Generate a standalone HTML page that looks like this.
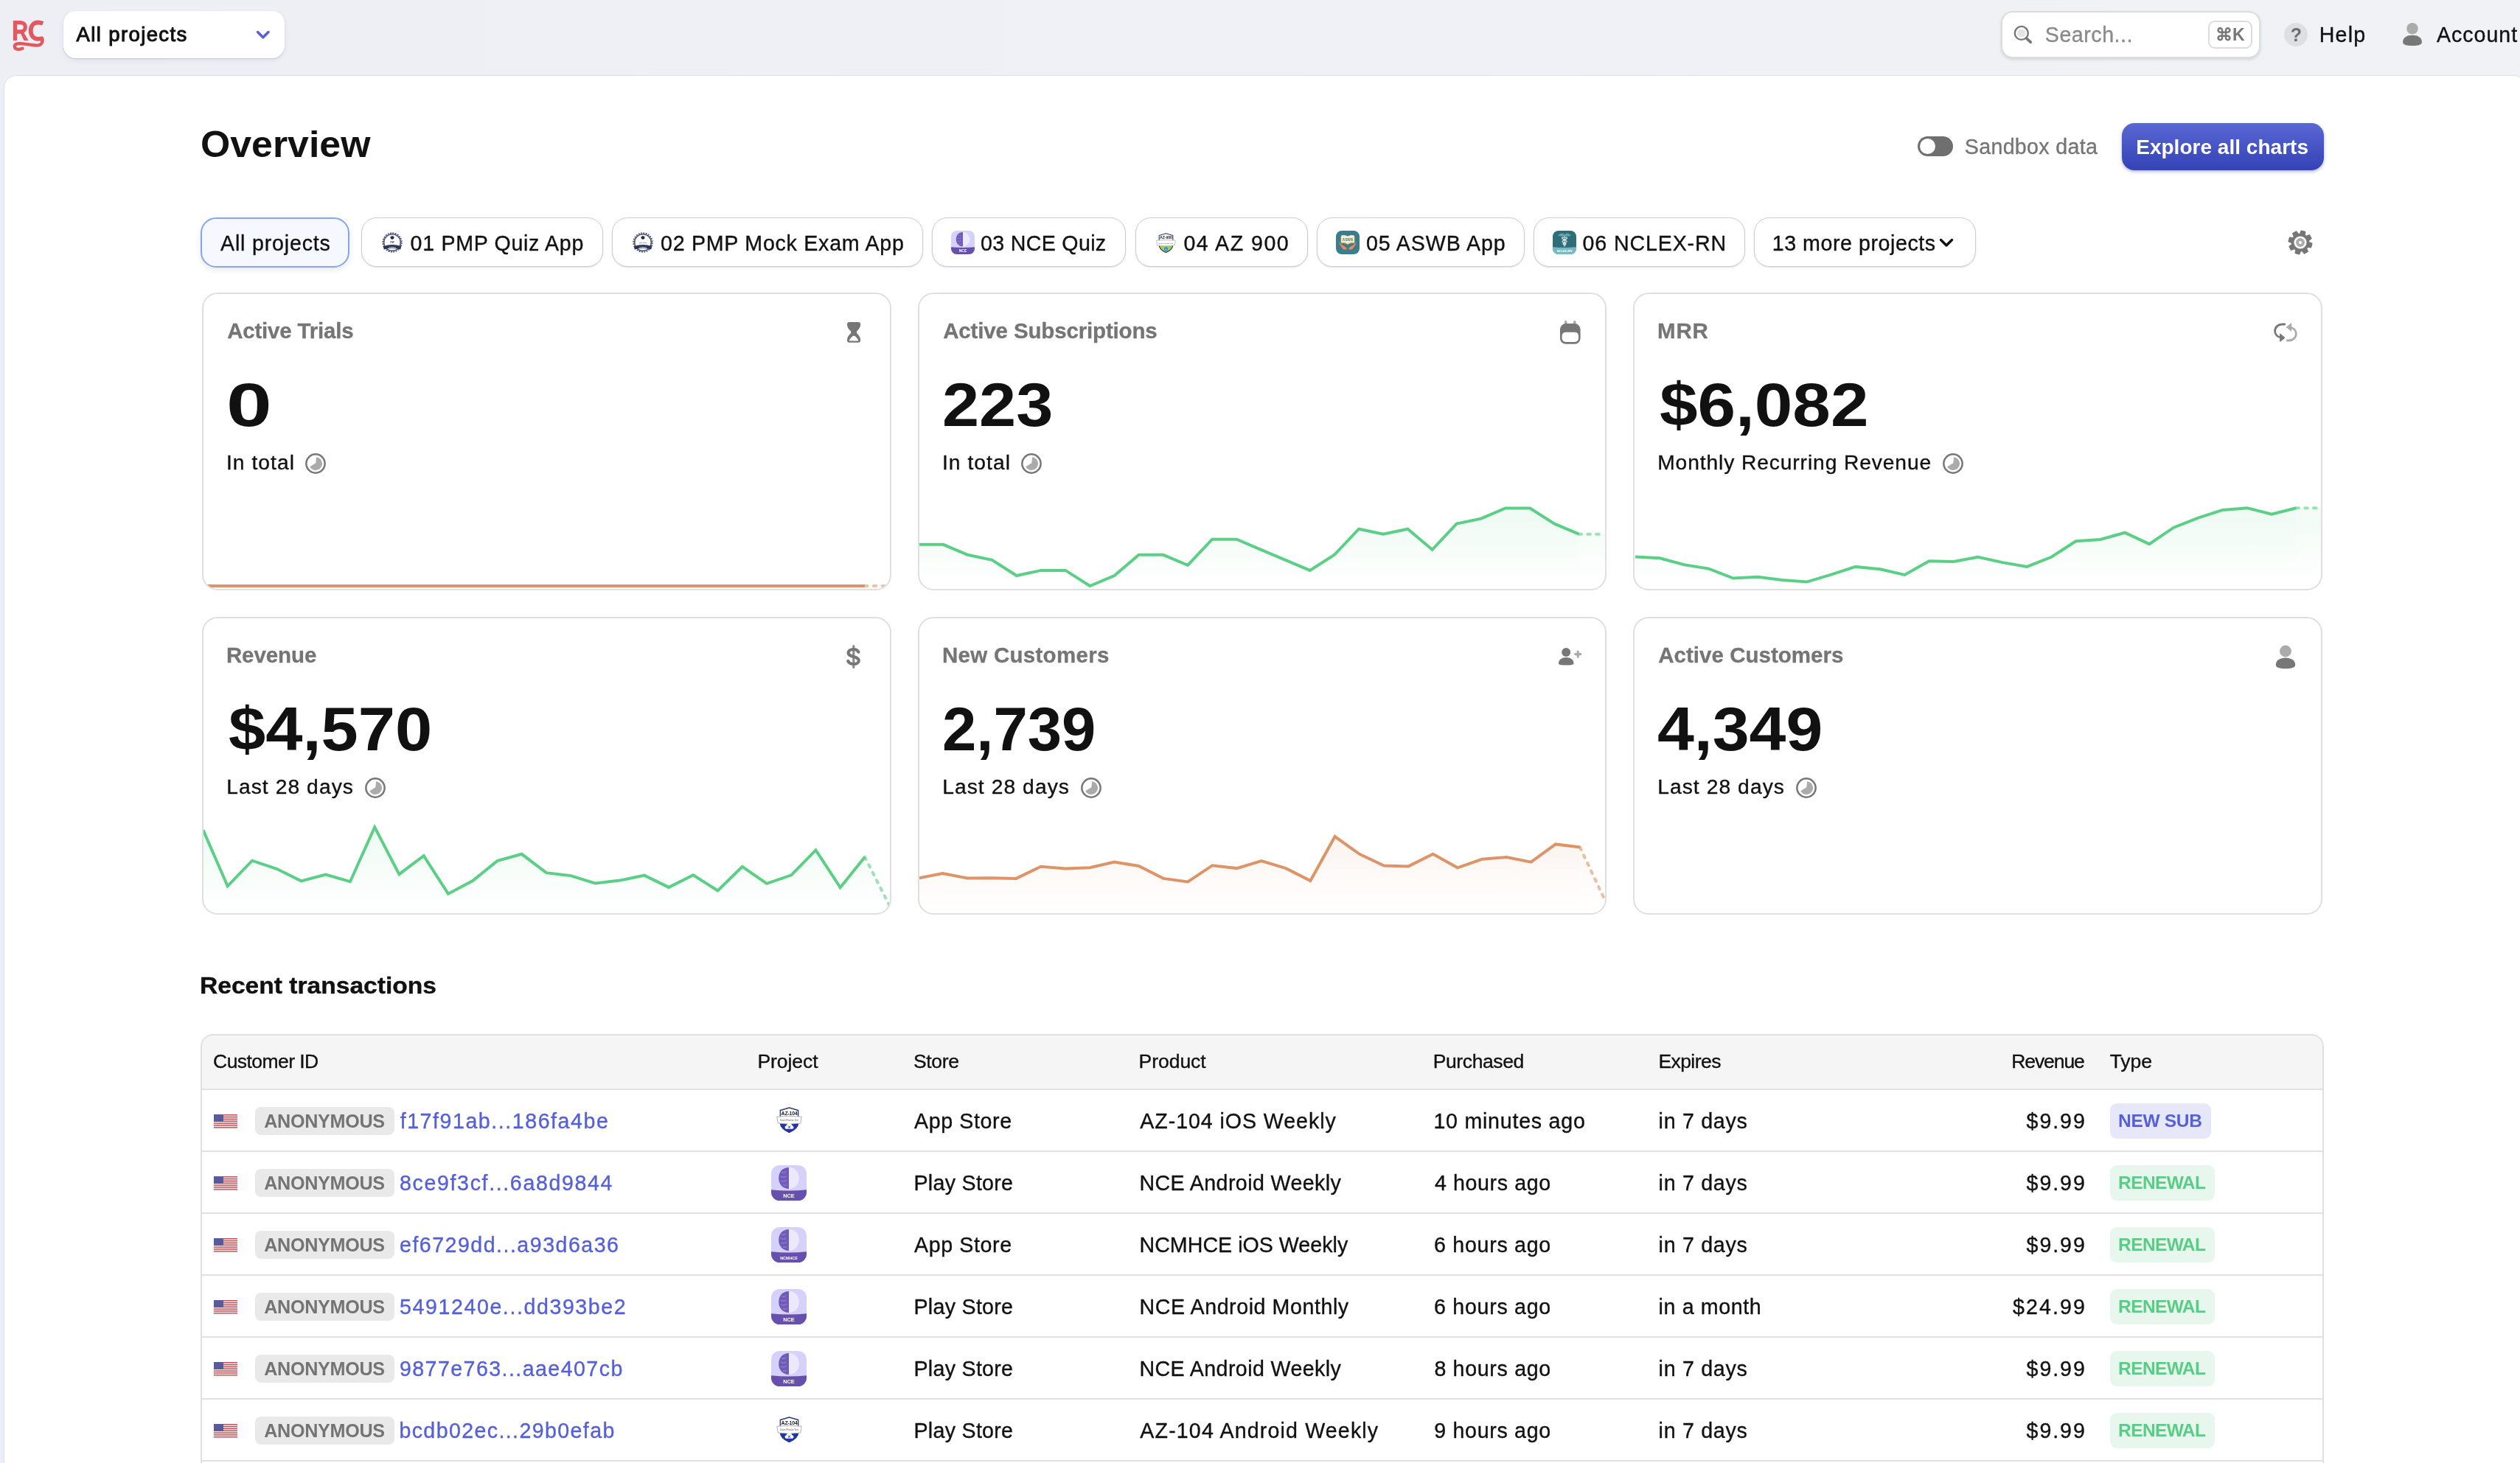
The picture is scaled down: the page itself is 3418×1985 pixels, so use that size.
<!DOCTYPE html><html lang="en"><head><meta charset="utf-8"><title>Overview</title><style>
*{box-sizing:border-box;margin:0;padding:0}
html,body{width:3418px;height:1985px;overflow:hidden}
body{background:linear-gradient(90deg,#edeff5 0%,#f1f2f6 100%);font-family:"Liberation Sans",sans-serif;color:#111;position:relative}
#root{position:absolute;left:0;top:0;width:3418px;height:1985px;overflow:hidden;will-change:transform}
.t{position:absolute;white-space:nowrap;line-height:1}
.abs{position:absolute}
.panel{position:absolute;left:5px;top:102px;width:3421px;height:1920px;background:#fff;border:1px solid #dcdfe6;border-radius:17px}
.dd{position:absolute;left:86px;top:15px;width:300px;height:64px;background:#fff;border-radius:17px;box-shadow:0 1px 2px rgba(20,30,60,.17),0 3px 8px rgba(20,30,60,.06)}
.search{position:absolute;left:2714px;top:15px;width:352px;height:64px;background:#fff;border-radius:16px;border:2px solid #dcdcdc;box-shadow:0 2px 4px rgba(0,0,0,.12)}
.kbd{position:absolute;left:2995px;top:28px;width:60px;height:38px;border:2px solid #dcdcdc;border-radius:9px;background:#fff}
.chip{position:absolute;top:295px;height:67px;background:#fff;border:1.7px solid #cdcdcd;border-radius:21px;box-shadow:0 1px 2px rgba(0,0,0,.13)}
.chip.sel{background:#f5f8fe;border:2px solid #85a6ec;box-shadow:0 3px 8px rgba(0,0,0,.09);height:68px;border-radius:21px}
.card{position:absolute;width:935px;height:404px;background:#fff;border:2px solid #dfdfdf;border-radius:21px;overflow:hidden}
.card svg{position:absolute;left:-2px;top:-2px}
.btn{position:absolute;left:2878px;top:167px;width:274px;height:64px;border-radius:17px;background:linear-gradient(#5a68d4,#3342b6);box-shadow:0 2px 4px rgba(40,50,140,.35)}
.toggle{position:absolute;left:2601px;top:185px;width:48px;height:27px;border-radius:14px;background:#6f6f6f}
.toggle i{position:absolute;left:3px;top:3px;width:21px;height:21px;border-radius:50%;background:#fff}
.table{position:absolute;left:272px;top:1403px;width:2880px;height:700px;border:2px solid #e0e0e0;border-radius:17px;background:#fff;overflow:hidden}
.th{position:absolute;left:0;top:0;width:100%;height:74px;background:#f5f5f5}
.hl{position:absolute;left:274px;width:2876px;height:2px;background:#e2e2e2}
.anon{position:absolute;left:346px;width:189px;height:38px;border-radius:8px;background:#e9e9e9}
.badge{position:absolute;left:2862px;height:48px;border-radius:9px}
</style></head><body><div id="root">
<!--TOPBAR-->
<svg class="abs" style="left:10px;top:20px" width="60" height="56" viewBox="10 20 60 56"><g fill="none" stroke="#e1595e" stroke-width="5.3"><path d="M20.5 55V28M20.5 30.6H28.2a6.200 6.200 0 0 1 0 12.400H20.500"/><path d="M58.2 31.9C56.200 31 54 30.500 51.600 30.500C45.400 30.500 41.700 35 41.700 41.600C41.700 48.300 45.600 52.900 52 52.900C54.800 52.900 56.800 52.500 58.600 51.700" stroke-width="5.8"/><path d="M57.300 52.200C58.300 57.500 56.500 61.600 50 61.600C44 61.600 37 59.700 29 59.100C24 58.700 19.800 59.600 19.800 63C19.800 66.200 23 67.100 25.600 66.900C27.600 66.700 29 66.100 30.600 65.600" stroke-width="4.3" stroke-linecap="round"/></g><path d="M27 43.2L31.8 43.200L38.600 55L32.600 55Z" fill="#e1595e"/></svg>
<div class="dd"></div>
<div class="t" style="top:33.4px;font-size:27.6px;left:103.5px;-webkit-text-stroke:.35px;letter-spacing:1.35px;-webkit-text-stroke:1px;">All projects</div>
<svg class="abs" style="left:346px;top:40px" width="22" height="15" viewBox="0 0 22 15"><path d="M3.600 3.600l7.200 7.200 7.200-7.200" fill="none" stroke="#5560d8" stroke-width="3.500" stroke-linecap="round" stroke-linejoin="round"/></svg>
<div class="search"></div>
<svg class="abs" style="left:2728px;top:31px" width="30" height="30" viewBox="2728 31 30 30"><circle cx="2741.8" cy="44.900" r="9" fill="#fff" stroke="#777" stroke-width="2.400"/><circle cx="2741.8" cy="44.900" r="5.700" fill="#e4e4e4"/><path d="M2748.5 51.900L2754.200 57.200" stroke="#777" stroke-width="3.700" stroke-linecap="round"/></svg>
<div class="t" style="top:33.3px;font-size:28.6px;left:2773.8px;-webkit-text-stroke:.35px;color:#8a8a8a;letter-spacing:0.53px;">Search...</div>
<div class="kbd"></div>
<div class="t" style="top:36.0px;font-size:23px;left:3005.0px;font-weight:700;color:#777;font-family:"DejaVu Sans","Liberation Sans",sans-serif;">⌘K</div>
<div class="abs" style="left:3098px;top:31px;width:32px;height:32px;border-radius:50%;background:#dedfe3"></div>
<div class="t" style="top:34.8px;font-size:25px;left:3106.8px;font-weight:700;color:#6e6e6e;">?</div>
<div class="t" style="top:33.3px;font-size:28.6px;left:3145.8px;-webkit-text-stroke:.35px;letter-spacing:1.17px;">Help</div>
<svg class="abs" style="left:3258px;top:30px" width="28" height="32.4" viewBox="0 0 28 33"><circle cx="14" cy="9" r="7.900" fill="#ababab"/><path d="M0.800 27.500C0.800 21.500 6.500 18.100 14 18.100S27.200 21.500 27.200 27.500C27.200 31.500 21.500 32.700 14 32.700S0.800 31.500 0.800 27.500Z" fill="#777"/></svg>
<div class="t" style="top:33.3px;font-size:28.6px;left:3305.0px;-webkit-text-stroke:.35px;letter-spacing:0.96px;">Account</div>
<!--PANEL-->
<div class="panel"></div>
<div class="t" style="top:170.9px;font-size:50px;left:271.7px;font-weight:700;transform:scaleX(1.0363);transform-origin:left center;">Overview</div>
<div class="toggle"><i></i></div>
<div class="t" style="top:185.3px;font-size:28.6px;left:2664.8px;-webkit-text-stroke:.35px;color:#757575;letter-spacing:0.32px;">Sandbox data</div>
<div class="btn"></div>
<div class="t" style="top:185.8px;font-size:28px;left:2897.2px;font-weight:700;color:#fff;letter-spacing:0.02px;">Explore all charts</div>
<!--CHIPS-->
<div class="chip sel" style="left:272px;width:202px"></div>
<div class="t" style="top:315.8px;font-size:28.6px;left:299.0px;-webkit-text-stroke:.35px;letter-spacing:0.82px;">All projects</div>
<div class="chip" style="left:490px;width:328px"></div>
<svg class="abs" style="left:517.9px;top:315.0px" width="28" height="28" viewBox="0 0 28 28"><circle cx="14" cy="14" r="12.800" fill="none" stroke="#4c5678" stroke-width="1.800" stroke-dasharray="1.900 1.450"/><circle cx="14" cy="14" r="11.300" fill="#fff" stroke="#4c5678" stroke-width="1.500"/><path d="M11.400 6.300l2.600-1.300 2.600 1.300-.4 2.500-2.200 1.100-2.200-1.100z" fill="#262c3e"/><path d="M1.800 19.200Q14 14.600 26.200 19.200L25.200 23.400Q14 19.600 2.800 23.400Z" fill="#2b3656"/><text x="14" y="15" font-family="Liberation Sans,sans-serif" font-weight="700" font-size="2.600" fill="#444c66" text-anchor="middle">PMP</text><text x="14" y="20.800" font-family="Liberation Sans,sans-serif" font-weight="700" font-size="2.500" fill="#fff" text-anchor="middle">certified</text></svg>
<div class="t" style="top:315.8px;font-size:28.6px;left:556.6px;-webkit-text-stroke:.35px;letter-spacing:0.68px;">01 PMP Quiz App</div>
<div class="chip" style="left:830px;width:422px"></div>
<svg class="abs" style="left:858px;top:315.0px" width="28" height="28" viewBox="0 0 28 28"><circle cx="14" cy="14" r="12.800" fill="none" stroke="#4c5678" stroke-width="1.800" stroke-dasharray="1.900 1.450"/><circle cx="14" cy="14" r="11.300" fill="#fff" stroke="#4c5678" stroke-width="1.500"/><path d="M11.400 6.300l2.600-1.300 2.600 1.300-.4 2.500-2.200 1.100-2.200-1.100z" fill="#262c3e"/><path d="M1.800 19.200Q14 14.600 26.200 19.200L25.200 23.400Q14 19.600 2.800 23.400Z" fill="#2b3656"/><text x="14" y="15" font-family="Liberation Sans,sans-serif" font-weight="700" font-size="2" fill="#444c66" text-anchor="middle">PMP Mock</text><text x="14" y="20.800" font-family="Liberation Sans,sans-serif" font-weight="700" font-size="2.500" fill="#fff" text-anchor="middle">certified</text></svg>
<div class="t" style="top:315.8px;font-size:28.6px;left:896.0px;-webkit-text-stroke:.35px;letter-spacing:0.74px;">02 PMP Mock Exam App</div>
<div class="chip" style="left:1264px;width:263px"></div>
<svg class="abs" style="left:1290px;top:313.0px" width="32" height="32" viewBox="0 0 48 48"><defs><clipPath id="u1"><rect width="48" height="48" rx="11.5"/></clipPath></defs><g clip-path="url(#u1)"><rect width="48" height="48" fill="#d5d1fb"/><path d="M0 33.2Q24 35.600 48 33.200V48H0z" fill="#674fae"/><path d="M24 3C15 3 10.200 9.500 10.200 17.500S15.500 32 24 32z" fill="#705cb8"/><path d="M24 3C33 3 37.800 9.500 37.800 17.500S32.500 32 24 32z" fill="#ece9fd"/><path d="M14 9.500q3 2 6-.5M12.500 15q4 2.500 8 0M13 21q4 2 8-.500M16 26.500q2.500 1.500 5.500 0" stroke="#8f7fd0" stroke-width="1.300" fill="none"/><text x="24" y="44" font-family="Liberation Sans,sans-serif" font-weight="700" font-size="7.4" fill="#fff" text-anchor="middle">NCE</text></g></svg>
<div class="t" style="top:315.8px;font-size:28.6px;left:1330.0px;-webkit-text-stroke:.35px;letter-spacing:0.33px;">03 NCE Quiz</div>
<div class="chip" style="left:1539.5px;width:234.5px"></div>
<svg class="abs" style="left:1567.8px;top:315.5px" width="27" height="27" viewBox="0 0 28 28"><defs><clipPath id="u2"><rect x="0" y="17.200" width="28" height="12"/></clipPath></defs><path d="M4.3 3.600L14 0.800L23.700 3.600V16.500C23.700 21.800 18.800 25.400 14 27.400C9.200 25.400 4.300 21.800 4.300 16.500Z" fill="#fff" stroke="#2a3d78" stroke-width="1.100" stroke-linejoin="round"/><path clip-path="url(#u2)" d="M4.3 3.600L14 0.800L23.700 3.600V16.500C23.700 21.800 18.800 25.400 14 27.400C9.200 25.400 4.300 21.800 4.300 16.500Z" fill="#9ccf5c" stroke="#2a3d78" stroke-width="1.100" stroke-linejoin="round"/><path d="M0.600 10.600Q14 9 27.400 10.600L26.200 17.600Q14 19.400 1.800 17.600Z" fill="#fff" stroke="#a4a4a8" stroke-width=".7" stroke-linejoin="round"/><text x="14" y="8.600" font-family="Liberation Sans,sans-serif" font-weight="700" font-size="5.600" fill="#1b1b22" text-anchor="middle" letter-spacing="-.2">AZ-900</text><text x="14" y="15.300" font-family="Liberation Sans,sans-serif" font-size="2.300" fill="#555" text-anchor="middle">Exam Practice Test</text><path d="M14 19.600l2.600 1.500v3l-2.600 1.500-2.600-1.500v-3z" fill="#3a86d6"/><path d="M12.900 23.600q1.100-2.400 2.200 0" stroke="#fff" stroke-width=".7" fill="none"/></svg>
<div class="t" style="top:315.8px;font-size:28.6px;left:1605.4px;-webkit-text-stroke:.35px;letter-spacing:1.5px;">04 AZ 900</div>
<div class="chip" style="left:1786px;width:282px"></div>
<svg class="abs" style="left:1812px;top:313.0px" width="32" height="32" viewBox="0 0 32 32"><rect width="32" height="32" rx="8" fill="#3a7d8c"/><path d="M3.700 12.400C4.200 16 5.700 18 8.700 19.500L13.200 22.300C14.400 23.100 14.700 24.400 14.700 25.600H10.200C8.200 22.600 4.400 20 3.700 12.400Z" fill="#ee8657"/><path d="M28.300 12.400C27.800 16 26.300 18 23.300 19.500L18.800 22.300C17.600 23.100 17.300 24.400 17.300 25.600H21.800C23.800 22.600 27.600 20 28.300 12.400Z" fill="#ee8657"/><path d="M6.500 7.800Q11.500 5.800 16 8.600Q20.500 5.800 25.500 7.800V17.400Q20.500 16 16 19.300Q11.500 16 6.500 17.400Z" fill="#e9945f"/><path d="M7.200 6.600Q11.800 5 16 7.600Q20.200 5 24.800 6.600V16.200Q20.200 15 16 18Q11.800 15 7.200 16.200Z" fill="#fbf0c9"/><text x="16" y="13.500" font-family="Liberation Sans,sans-serif" font-weight="700" font-size="4.700" fill="#3a7d8c" text-anchor="middle">ASWB</text></svg>
<div class="t" style="top:315.8px;font-size:28.6px;left:1853.0px;-webkit-text-stroke:.35px;letter-spacing:0.9px;">05 ASWB App</div>
<div class="chip" style="left:2080px;width:287px"></div>
<svg class="abs" style="left:2106px;top:313.0px" width="32" height="32" viewBox="0 0 32 32"><defs><clipPath id="u3"><rect width="32" height="32" rx="8"/></clipPath></defs><g clip-path="url(#u3)"><rect width="32" height="32" fill="#2f6e79"/><path d="M0 22.200Q16 23.800 32 22.200V32H0z" fill="#7ab9c4"/><path d="M16 5.400C14 3.200 11.500 3.400 10 4.300 9 5 7.800 6 6.800 6.600 9 7.600 12.500 7.800 16 7.600 19.500 7.800 23 7.600 25.200 6.600 24.200 6 23 5 22 4.300 20.500 3.400 18 3.200 16 5.400Z" fill="#62a6b0"/><path d="M16 7.500V21.500" stroke="#eef8f9" stroke-width="1" stroke-linecap="round"/><path d="M14.800 9.400C12.800 8.200 11.800 10.400 13.400 11.200L18 13.400C19.600 14.200 18.800 15.600 17.600 16L14.800 17C13.800 17.400 14 18.600 15 18.900L16.800 19.600" stroke="#eef8f9" stroke-width="1.100" fill="none" stroke-linecap="round"/><path d="M17.200 9.400C19.200 8.200 20.200 10.400 18.600 11.200L14 13.400C12.400 14.200 13.200 15.600 14.400 16L17.200 17C18.200 17.400 18 18.600 17 18.900" stroke="#eef8f9" stroke-width="1.100" fill="none" stroke-linecap="round"/><text x="16" y="29" font-family="Liberation Sans,sans-serif" font-weight="700" font-size="4" fill="#fff" text-anchor="middle">NCLEX-RN</text></g></svg>
<div class="t" style="top:315.8px;font-size:28.6px;left:2146.6px;-webkit-text-stroke:.35px;letter-spacing:0.86px;">06 NCLEX-RN</div>
<div class="chip" style="left:2379px;width:301px"></div>
<div class="t" style="top:315.8px;font-size:28.6px;left:2403.7px;-webkit-text-stroke:.35px;letter-spacing:0.56px;">13 more projects</div>
<svg class="abs" style="left:2628.7px;top:322px" width="22" height="16" viewBox="0 0 22 16"><path d="M3.500 3.500l7.500 7.500 7.500-7.500" fill="none" stroke="#111" stroke-width="3.400" stroke-linecap="round" stroke-linejoin="round"/></svg>
<svg class="abs" style="left:3100px;top:309px" width="40" height="40" viewBox="0 0 40 40"><path d="M19.90 8.60 L21.50 4.47 L26.47 5.80 L25.79 10.18 L27.99 11.87 L32.04 10.08 L34.61 14.54 L31.04 17.15 L31.40 19.90 L35.53 21.50 L34.20 26.47 L29.82 25.79 L28.13 27.99 L29.92 32.04 L25.46 34.61 L22.85 31.04 L20.10 31.40 L18.50 35.53 L13.53 34.20 L14.21 29.82 L12.01 28.13 L7.96 29.92 L5.39 25.46 L8.96 22.85 L8.60 20.10 L4.47 18.50 L5.80 13.53 L10.18 14.21 L11.87 12.01 L10.08 7.96 L14.54 5.39 L17.15 8.96Z" fill="#767676" stroke="#767676" stroke-width="2" stroke-linejoin="round"/><circle cx="20" cy="20" r="8.600" fill="#fff"/><circle cx="20" cy="20" r="4" fill="none" stroke="#ababab" stroke-width="3.800"/></svg>
<!--CARDS-->
<div class="card" style="left:274px;top:397px;width:935px"><svg width="935" height="404" viewBox="0 0 935 404"><path d="M1 397.9H899" stroke="#dc9468" stroke-width="4"/><path d="M899 397.9H933" stroke="#dc9468" stroke-opacity=".55" stroke-width="4" stroke-dasharray="3.6 8.2" stroke-linecap="round"/></svg></div>
<div class="t" style="top:433.9px;font-size:29.5px;left:308.2px;font-weight:700;color:#757575;letter-spacing:-0.2px;-webkit-text-stroke:.3px;">Active Trials</div>
<div class="t" style="top:506.7px;font-size:84px;left:306.6px;font-weight:700;transform:scaleX(1.3209);transform-origin:left center;">0</div>
<div class="t" style="top:613.1px;font-size:28.2px;left:307.0px;-webkit-text-stroke:.35px;letter-spacing:1.04px;">In total</div>
<svg class="abs" style="left:412.9px;top:613.9px" width="30" height="30" viewBox="-15 -15 30 30"><circle cx="0" cy="0" r="12.650" fill="#fff" stroke="#777" stroke-width="2.500"/><path d="M0.900 -0.400L1.600 -8.100A8.300 8.300 0 1 1 -7 4.400Z" fill="#ababab" stroke="#ababab" stroke-width="1.200" stroke-linejoin="round"/></svg>
<svg class="abs" style="left:1149px;top:437px" width="18.200" height="27.800" viewBox="0 0 18.200 27.800"><path d="M3 0H15.200Q18.200 0 18.200 3C18 8 15.300 10.300 13 12.700V15.100C15.300 17.500 18 19.800 18.200 24.800Q18.200 27.800 15.200 27.800H3Q0 27.800 0 24.800C0.200 19.800 2.900 17.500 5.200 15.100V12.700C2.900 10.300 0.200 8 0 3Q0 0 3 0Z" fill="#767676"/><path d="M9.100 18.600C10.700 18.600 14 22.300 15.100 24.300Q15.600 25.600 14.200 25.600H4Q2.600 25.600 3.100 24.300C4.200 22.300 7.500 18.600 9.100 18.600Z" fill="#fff"/></svg>
<div class="card" style="left:1245px;top:397px;width:934px"><svg width="934" height="404" viewBox="0 0 934 404"><defs><linearGradient id="g5bcf86931" x1="0" y1="293" x2="0" y2="396" gradientUnits="userSpaceOnUse"><stop offset="0" stop-color="#5bcf86" stop-opacity=".105"/><stop offset="1" stop-color="#5bcf86" stop-opacity="0"/></linearGradient></defs><path d="M1.2 341.8 L34.4 341.8 L67.5 355.8 L100.7 362.9 L133.8 384.0 L167.0 376.9 L200.2 376.9 L233.3 398.0 L266.5 384.0 L299.6 355.8 L332.8 355.8 L366.0 369.9 L399.1 334.7 L432.3 334.7 L465.4 348.8 L498.6 362.9 L531.8 376.9 L564.9 355.8 L598.1 320.7 L631.2 327.7 L664.4 320.7 L697.6 348.8 L730.7 313.6 L763.9 306.6 L797.0 292.5 L830.2 292.5 L863.4 313.6 L896.5 327.7 L896.5 404 L1.2 404Z" fill="url(#g5bcf86931)"/><path d="M896.5 327.7 L929.7 327.7 L932.7 327.7 L932.7 404 L896.5 404Z" fill="url(#g5bcf86931)" opacity=".8"/><path d="M1.2 341.8 L34.4 341.8 L67.5 355.8 L100.7 362.9 L133.8 384.0 L167.0 376.9 L200.2 376.9 L233.3 398.0 L266.5 384.0 L299.6 355.8 L332.8 355.8 L366.0 369.9 L399.1 334.7 L432.3 334.7 L465.4 348.8 L498.6 362.9 L531.8 376.9 L564.9 355.8 L598.1 320.7 L631.2 327.7 L664.4 320.7 L697.6 348.8 L730.7 313.6 L763.9 306.6 L797.0 292.5 L830.2 292.5 L863.4 313.6 L896.5 327.7" fill="none" stroke="#5bcf86" stroke-width="4" stroke-linejoin="miter" stroke-linecap="butt"/><path d="M896.5 327.7 L929.7 327.7" fill="none" stroke="#5bcf86" stroke-opacity=".6" stroke-width="4" stroke-dasharray="3.6 8.2" stroke-linecap="round"/></svg></div>
<div class="t" style="top:433.9px;font-size:29.5px;left:1279.2px;font-weight:700;color:#757575;letter-spacing:-0.15px;-webkit-text-stroke:.3px;">Active Subscriptions</div>
<div class="t" style="top:506.7px;font-size:84px;left:1277.7px;font-weight:700;transform:scaleX(1.0719);transform-origin:left center;">223</div>
<div class="t" style="top:613.1px;font-size:28.2px;left:1278.0px;-webkit-text-stroke:.35px;letter-spacing:1.04px;">In total</div>
<svg class="abs" style="left:1383.9px;top:613.9px" width="30" height="30" viewBox="-15 -15 30 30"><circle cx="0" cy="0" r="12.650" fill="#fff" stroke="#777" stroke-width="2.500"/><path d="M0.900 -0.400L1.600 -8.100A8.300 8.300 0 1 1 -7 4.400Z" fill="#ababab" stroke="#ababab" stroke-width="1.200" stroke-linejoin="round"/></svg>
<svg class="abs" style="left:2116.2px;top:435px" width="27.600" height="32" viewBox="0 0 27.600 32"><rect x="6" y="0" width="3.600" height="7" rx="1.800" fill="#ababab"/><rect x="18" y="0" width="3.600" height="7" rx="1.800" fill="#ababab"/><rect x="0" y="4.100" width="27.600" height="27.600" rx="7.800" fill="#767676"/><rect x="2.600" y="15.800" width="22.400" height="13.100" rx="4.800" fill="#fff"/></svg>
<div class="card" style="left:2215px;top:397px;width:935px"><svg width="935" height="404" viewBox="0 0 935 404"><defs><linearGradient id="g5bcf86975" x1="0" y1="292" x2="0" y2="396" gradientUnits="userSpaceOnUse"><stop offset="0" stop-color="#5bcf86" stop-opacity=".105"/><stop offset="1" stop-color="#5bcf86" stop-opacity="0"/></linearGradient></defs><path d="M3.1 358.4 L36.3 360.3 L69.5 369.2 L102.7 374.6 L135.9 387.6 L169.1 385.7 L202.3 390.0 L235.5 392.6 L268.7 382.6 L301.9 371.9 L335.1 375.3 L368.3 383.0 L401.5 364.2 L434.6 364.9 L467.8 358.8 L501.0 366.1 L534.2 371.9 L567.4 358.8 L600.6 337.2 L633.8 334.9 L667.0 325.7 L700.2 341.1 L733.4 318.7 L766.6 305.7 L799.8 294.9 L833.0 292.2 L866.2 300.7 L899.4 292.2 L899.4 404 L3.1 404Z" fill="url(#g5bcf86975)"/><path d="M899.4 292.2 L932.6 292.2 L935.6 292.2 L935.6 404 L899.4 404Z" fill="url(#g5bcf86975)" opacity=".8"/><path d="M3.1 358.4 L36.3 360.3 L69.5 369.2 L102.7 374.6 L135.9 387.6 L169.1 385.7 L202.3 390.0 L235.5 392.6 L268.7 382.6 L301.9 371.9 L335.1 375.3 L368.3 383.0 L401.5 364.2 L434.6 364.9 L467.8 358.8 L501.0 366.1 L534.2 371.9 L567.4 358.8 L600.6 337.2 L633.8 334.9 L667.0 325.7 L700.2 341.1 L733.4 318.7 L766.6 305.7 L799.8 294.9 L833.0 292.2 L866.2 300.7 L899.4 292.2" fill="none" stroke="#5bcf86" stroke-width="4" stroke-linejoin="miter" stroke-linecap="butt"/><path d="M899.4 292.2 L932.6 292.2" fill="none" stroke="#5bcf86" stroke-opacity=".6" stroke-width="4" stroke-dasharray="3.6 8.2" stroke-linecap="round"/></svg></div>
<div class="t" style="top:433.9px;font-size:29.5px;left:2247.9px;font-weight:700;color:#757575;letter-spacing:0.92px;-webkit-text-stroke:.3px;">MRR</div>
<div class="t" style="top:506.7px;font-size:84px;left:2251.0px;font-weight:700;transform:scaleX(1.1032);transform-origin:left center;">$6,082</div>
<div class="t" style="top:613.1px;font-size:28.2px;left:2248.2px;-webkit-text-stroke:.35px;letter-spacing:0.9px;">Monthly Recurring Revenue</div>
<svg class="abs" style="left:2634.4px;top:613.9px" width="30" height="30" viewBox="-15 -15 30 30"><circle cx="0" cy="0" r="12.650" fill="#fff" stroke="#777" stroke-width="2.500"/><path d="M0.900 -0.400L1.600 -8.100A8.300 8.300 0 1 1 -7 4.400Z" fill="#ababab" stroke="#ababab" stroke-width="1.200" stroke-linejoin="round"/></svg>
<svg class="abs" style="left:3084px;top:437.5px" width="32" height="26" viewBox="0 0 32 26"><path d="M14.800 2H11.500C6 2 1.600 6 1.600 11C1.600 16 5.500 19.500 10.500 20.200" fill="none" stroke="#777" stroke-width="2.800" stroke-linecap="round"/><path d="M8.700 15L15 20.200L8.700 25.400Z" fill="#777" stroke="#777" stroke-width="1" stroke-linejoin="round"/><path d="M17.300 24H20.500C26 24 30.300 20 30.300 15C30.300 10 26.500 6.500 21.500 5.800" fill="none" stroke="#ababab" stroke-width="2.800"/><path d="M23.700 .700L17.400 5.900L23.700 11.100Z" fill="#ababab" stroke="#ababab" stroke-width="1" stroke-linejoin="round"/></svg>
<div class="card" style="left:274px;top:837px;width:935px"><svg width="935" height="404" viewBox="0 0 935 404"><defs><linearGradient id="g5bcf86795" x1="0" y1="285" x2="0" y2="396" gradientUnits="userSpaceOnUse"><stop offset="0" stop-color="#5bcf86" stop-opacity=".105"/><stop offset="1" stop-color="#5bcf86" stop-opacity="0"/></linearGradient></defs><path d="M1.5 289.1 L34.7 365.3 L68.0 330.7 L101.2 341.8 L134.5 358.4 L167.7 349.5 L200.9 359.2 L234.2 285.3 L267.4 349.2 L300.7 324.1 L333.9 375.7 L367.1 358.0 L400.4 331.1 L433.6 321.8 L466.9 347.2 L500.1 351.1 L533.3 361.5 L566.6 357.6 L599.8 350.7 L633.1 366.9 L666.3 350.3 L699.5 371.5 L732.8 338.8 L766.0 361.9 L799.3 350.3 L832.5 316.4 L865.7 367.2 L899.0 325.7 L899.0 404 L1.5 404Z" fill="url(#g5bcf86795)"/><path d="M899.0 325.7 L932.2 391.1 L935.2 391.1 L935.2 404 L899.0 404Z" fill="url(#g5bcf86795)" opacity=".8"/><path d="M1.5 289.1 L34.7 365.3 L68.0 330.7 L101.2 341.8 L134.5 358.4 L167.7 349.5 L200.9 359.2 L234.2 285.3 L267.4 349.2 L300.7 324.1 L333.9 375.7 L367.1 358.0 L400.4 331.1 L433.6 321.8 L466.9 347.2 L500.1 351.1 L533.3 361.5 L566.6 357.6 L599.8 350.7 L633.1 366.9 L666.3 350.3 L699.5 371.5 L732.8 338.8 L766.0 361.9 L799.3 350.3 L832.5 316.4 L865.7 367.2 L899.0 325.7" fill="none" stroke="#5bcf86" stroke-width="4" stroke-linejoin="miter" stroke-linecap="butt"/><path d="M899.0 325.7 L932.2 391.1" fill="none" stroke="#5bcf86" stroke-opacity=".6" stroke-width="4" stroke-dasharray="3.6 8.2" stroke-linecap="round"/></svg></div>
<div class="t" style="top:873.9px;font-size:29.5px;left:306.9px;font-weight:700;color:#757575;letter-spacing:-0.09px;-webkit-text-stroke:.3px;">Revenue</div>
<div class="t" style="top:946.7px;font-size:84px;left:309.9px;font-weight:700;transform:scaleX(1.0755);transform-origin:left center;">$4,570</div>
<div class="t" style="top:1053.1px;font-size:28.2px;left:307.2px;-webkit-text-stroke:.35px;letter-spacing:1.08px;">Last 28 days</div>
<svg class="abs" style="left:494.0px;top:1053.9px" width="30" height="30" viewBox="-15 -15 30 30"><circle cx="0" cy="0" r="12.650" fill="#fff" stroke="#777" stroke-width="2.500"/><path d="M0.900 -0.400L1.600 -8.100A8.300 8.300 0 1 1 -7 4.400Z" fill="#ababab" stroke="#ababab" stroke-width="1.200" stroke-linejoin="round"/></svg>
<svg class="abs" style="left:1148px;top:875px" width="20" height="32" viewBox="0 0 20 32"><path d="M9.800 1.600V30.400" stroke="#8c8c8c" stroke-width="3.200" stroke-linecap="round"/><path d="M16.400 9.600C15.200 7 12.700 6 9.800 6C5.700 6 2.600 7.800 2.600 10.800C2.600 14 6.200 15 9.800 16C13.700 17 16.800 18.200 16.800 21.400C16.800 24.300 13.700 26 9.800 26C6.400 26 3.700 24.800 2.300 22" fill="none" stroke="#777" stroke-width="4.200" stroke-linecap="round"/></svg>
<div class="card" style="left:1245px;top:837px;width:934px"><svg width="934" height="404" viewBox="0 0 934 404"><defs><linearGradient id="gdc9468965" x1="0" y1="298" x2="0" y2="396" gradientUnits="userSpaceOnUse"><stop offset="0" stop-color="#dc9468" stop-opacity=".105"/><stop offset="1" stop-color="#dc9468" stop-opacity="0"/></linearGradient></defs><path d="M0.4 354.5 L33.6 348.0 L66.9 354.5 L100.2 354.2 L133.4 354.9 L166.7 338.8 L199.9 341.5 L233.2 340.3 L266.4 332.6 L299.6 338.0 L332.9 354.9 L366.1 359.5 L399.4 337.2 L432.6 341.1 L465.9 331.1 L499.1 341.1 L532.4 358.0 L565.6 298.0 L598.9 321.8 L632.1 337.6 L665.4 338.4 L698.6 321.8 L731.9 340.3 L765.1 328.8 L798.4 326.1 L831.6 332.6 L864.9 308.4 L898.1 312.6 L898.1 404 L0.4 404Z" fill="url(#gdc9468965)"/><path d="M898.1 312.6 L931.4 383.4 L934.4 383.4 L934.4 404 L898.1 404Z" fill="url(#gdc9468965)" opacity=".8"/><path d="M0.4 354.5 L33.6 348.0 L66.9 354.5 L100.2 354.2 L133.4 354.9 L166.7 338.8 L199.9 341.5 L233.2 340.3 L266.4 332.6 L299.6 338.0 L332.9 354.9 L366.1 359.5 L399.4 337.2 L432.6 341.1 L465.9 331.1 L499.1 341.1 L532.4 358.0 L565.6 298.0 L598.9 321.8 L632.1 337.6 L665.4 338.4 L698.6 321.8 L731.9 340.3 L765.1 328.8 L798.4 326.1 L831.6 332.6 L864.9 308.4 L898.1 312.6" fill="none" stroke="#dc9468" stroke-width="4" stroke-linejoin="miter" stroke-linecap="butt"/><path d="M898.1 312.6 L931.4 383.4" fill="none" stroke="#dc9468" stroke-opacity=".6" stroke-width="4" stroke-dasharray="3.6 8.2" stroke-linecap="round"/></svg></div>
<div class="t" style="top:873.9px;font-size:29.5px;left:1277.9px;font-weight:700;color:#757575;letter-spacing:0.29px;-webkit-text-stroke:.3px;">New Customers</div>
<div class="t" style="top:946.7px;font-size:84px;left:1278.1px;font-weight:700;transform:scaleX(0.9914);transform-origin:left center;">2,739</div>
<div class="t" style="top:1053.1px;font-size:28.2px;left:1278.2px;-webkit-text-stroke:.35px;letter-spacing:1.08px;">Last 28 days</div>
<svg class="abs" style="left:1465.0px;top:1053.9px" width="30" height="30" viewBox="-15 -15 30 30"><circle cx="0" cy="0" r="12.650" fill="#fff" stroke="#777" stroke-width="2.500"/><path d="M0.900 -0.400L1.600 -8.100A8.300 8.300 0 1 1 -7 4.400Z" fill="#ababab" stroke="#ababab" stroke-width="1.200" stroke-linejoin="round"/></svg>
<svg class="abs" style="left:2114px;top:878px" width="34" height="26" viewBox="0 0 34 26"><circle cx="10.200" cy="6.900" r="6" fill="#777"/><path d="M0 22C0 17.200 4.500 14.100 10.200 14.100C16 14.100 20.500 17.200 20.500 22C20.500 24.100 17 24.600 10.200 24.600C3.500 24.600 0 24.100 0 22Z" fill="#777"/><path d="M26.200 6V13.200M22.600 9.600H29.800" stroke="#ababab" stroke-width="3.200" stroke-linecap="round"/></svg>
<div class="card" style="left:2215px;top:837px;width:935px"></div>
<div class="t" style="top:873.9px;font-size:29.5px;left:2249.2px;font-weight:700;color:#757575;letter-spacing:0.03px;-webkit-text-stroke:.3px;">Active Customers</div>
<div class="t" style="top:946.7px;font-size:84px;left:2248.4px;font-weight:700;transform:scaleX(1.0672);transform-origin:left center;">4,349</div>
<div class="t" style="top:1053.1px;font-size:28.2px;left:2248.2px;-webkit-text-stroke:.35px;letter-spacing:1.08px;">Last 28 days</div>
<svg class="abs" style="left:2435.0px;top:1053.9px" width="30" height="30" viewBox="-15 -15 30 30"><circle cx="0" cy="0" r="12.650" fill="#fff" stroke="#777" stroke-width="2.500"/><path d="M0.900 -0.400L1.600 -8.100A8.300 8.300 0 1 1 -7 4.400Z" fill="#ababab" stroke="#ababab" stroke-width="1.200" stroke-linejoin="round"/></svg>
<svg class="abs" style="left:3086px;top:874.5px" width="28" height="33" viewBox="0 0 28 33"><circle cx="14" cy="8.500" r="7.900" fill="#ababab"/><path d="M0.800 27C0.800 21 6.500 17.600 14 17.600S27.200 21 27.200 27C27.200 31 21.500 32.200 14 32.200S0.800 31 0.800 27Z" fill="#777"/></svg>
<!--TABLE-->
<div class="t" style="top:1322.0px;font-size:31.5px;left:271.4px;font-weight:700;transform:scaleX(1.0659);transform-origin:left center;-webkit-text-stroke:.4px;">Recent transactions</div>
<div class="table"><div class="th"></div></div>
<div class="t" style="top:1426.7px;font-size:26.5px;left:289.1px;-webkit-text-stroke:.35px;letter-spacing:-0.57px;">Customer ID</div>
<div class="t" style="top:1426.7px;font-size:26.5px;left:1027.5px;-webkit-text-stroke:.35px;letter-spacing:-0.08px;">Project</div>
<div class="t" style="top:1426.7px;font-size:26.5px;left:1238.9px;-webkit-text-stroke:.35px;letter-spacing:-0.28px;">Store</div>
<div class="t" style="top:1426.7px;font-size:26.5px;left:1544.6px;-webkit-text-stroke:.35px;letter-spacing:-0.04px;">Product</div>
<div class="t" style="top:1426.7px;font-size:26.5px;left:1943.7px;-webkit-text-stroke:.35px;letter-spacing:-0.38px;">Purchased</div>
<div class="t" style="top:1426.7px;font-size:26.5px;left:2249.4px;-webkit-text-stroke:.35px;letter-spacing:-0.56px;">Expires</div>
<div class="t" style="top:1426.7px;font-size:26.5px;left:2861.7px;-webkit-text-stroke:.35px;letter-spacing:-0.09px;">Type</div>
<div class="t" style="top:1426.7px;font-size:26.5px;left:2728.3px;-webkit-text-stroke:.35px;letter-spacing:-1.1px;">Revenue</div>
<svg class="abs" style="left:290px;top:1512.2px" width="32" height="18.5" viewBox="0 0 32 18.5"><rect width="32" height="18.5" fill="#f3e9ea"/><rect y="0.00" width="32" height="1.42" fill="#c24e59"/><rect y="2.85" width="32" height="1.42" fill="#c24e59"/><rect y="5.69" width="32" height="1.42" fill="#c24e59"/><rect y="8.54" width="32" height="1.42" fill="#c24e59"/><rect y="11.38" width="32" height="1.42" fill="#c24e59"/><rect y="14.23" width="32" height="1.42" fill="#c24e59"/><rect y="17.08" width="32" height="1.42" fill="#c24e59"/><rect width="13" height="9.96" fill="#585b99"/></svg>
<div class="anon" style="top:1502px"></div>
<div class="t" style="top:1509.0px;font-size:25.2px;left:358.2px;font-weight:700;color:#747474;letter-spacing:-0.33px;">ANONYMOUS</div>
<div class="t" style="top:1506.8px;font-size:28.6px;left:542.7px;-webkit-text-stroke:.35px;color:#5560d8;letter-spacing:1.54px;">f17f91ab...186fa4be</div>
<svg class="abs" style="left:1052.6px;top:1502.0px" width="35" height="35" viewBox="0 0 28 28"><defs><clipPath id="u4"><rect x="0" y="17.200" width="28" height="12"/></clipPath></defs><path d="M4.3 3.600L14 0.800L23.700 3.600V16.500C23.700 21.800 18.800 25.400 14 27.400C9.200 25.400 4.300 21.800 4.300 16.500Z" fill="#fff" stroke="#2a3d78" stroke-width="1.100" stroke-linejoin="round"/><path clip-path="url(#u4)" d="M4.3 3.600L14 0.800L23.700 3.600V16.500C23.700 21.800 18.800 25.400 14 27.400C9.200 25.400 4.300 21.800 4.300 16.500Z" fill="#1f2fbf" stroke="#2a3d78" stroke-width="1.100" stroke-linejoin="round"/><path d="M0.600 10.600Q14 9 27.400 10.600L26.200 17.600Q14 19.400 1.800 17.600Z" fill="#fff" stroke="#a4a4a8" stroke-width=".7" stroke-linejoin="round"/><text x="14" y="8.600" font-family="Liberation Sans,sans-serif" font-weight="700" font-size="5.600" fill="#1b1b22" text-anchor="middle" letter-spacing="-.2">AZ-104</text><text x="14" y="15.300" font-family="Liberation Sans,sans-serif" font-size="2.300" fill="#555" text-anchor="middle">Exam Practice Test</text><path d="M10.300 23.800a1.900 1.900 0 0 1 .600-3.600 3.200 3.200 0 0 1 6.200 0 1.900 1.900 0 0 1 .600 3.600z" fill="#fff"/><path d="M12.900 23l2.200-2.600M12.900 20.400l2.200 2.600" stroke="#1f2fbf" stroke-width=".8"/></svg>
<div class="t" style="top:1506.8px;font-size:28.6px;left:1240.0px;-webkit-text-stroke:.35px;letter-spacing:0.61px;">App Store</div>
<div class="t" style="top:1506.8px;font-size:28.6px;left:1546.3px;-webkit-text-stroke:.35px;letter-spacing:0.93px;">AZ-104 iOS Weekly</div>
<div class="t" style="top:1506.8px;font-size:28.6px;left:1944.4px;-webkit-text-stroke:.35px;letter-spacing:0.76px;">10 minutes ago</div>
<div class="t" style="top:1506.8px;font-size:28.6px;left:2249.6px;-webkit-text-stroke:.35px;letter-spacing:0.71px;">in 7 days</div>
<div class="t" style="top:1506.8px;font-size:28.6px;left:2748.6px;-webkit-text-stroke:.35px;letter-spacing:1.92px;">$9.99</div>
<div class="badge" style="top:1497px;width:137px;background:#e6e8fa"></div>
<div class="t" style="top:1508.5px;font-size:24.5px;left:2873.1px;font-weight:700;color:#5560d8;letter-spacing:-0.32px;">NEW SUB</div>
<div class="hl" style="top:1561px"></div>
<svg class="abs" style="left:290px;top:1596.2px" width="32" height="18.5" viewBox="0 0 32 18.5"><rect width="32" height="18.5" fill="#f3e9ea"/><rect y="0.00" width="32" height="1.42" fill="#c24e59"/><rect y="2.85" width="32" height="1.42" fill="#c24e59"/><rect y="5.69" width="32" height="1.42" fill="#c24e59"/><rect y="8.54" width="32" height="1.42" fill="#c24e59"/><rect y="11.38" width="32" height="1.42" fill="#c24e59"/><rect y="14.23" width="32" height="1.42" fill="#c24e59"/><rect y="17.08" width="32" height="1.42" fill="#c24e59"/><rect width="13" height="9.96" fill="#585b99"/></svg>
<div class="anon" style="top:1586px"></div>
<div class="t" style="top:1593.0px;font-size:25.2px;left:358.2px;font-weight:700;color:#747474;letter-spacing:-0.33px;">ANONYMOUS</div>
<div class="t" style="top:1590.8px;font-size:28.6px;left:542.0px;-webkit-text-stroke:.35px;color:#5560d8;letter-spacing:1.63px;">8ce9f3cf...6a8d9844</div>
<svg class="abs" style="left:1046px;top:1581px" width="48" height="48" viewBox="0 0 48 48"><defs><clipPath id="u5"><rect width="48" height="48" rx="11.5"/></clipPath></defs><g clip-path="url(#u5)"><rect width="48" height="48" fill="#d5d1fb"/><path d="M0 33.2Q24 35.600 48 33.200V48H0z" fill="#674fae"/><path d="M24 3C15 3 10.200 9.500 10.200 17.500S15.500 32 24 32z" fill="#705cb8"/><path d="M24 3C33 3 37.800 9.500 37.800 17.500S32.500 32 24 32z" fill="#ece9fd"/><path d="M14 9.500q3 2 6-.5M12.500 15q4 2.500 8 0M13 21q4 2 8-.500M16 26.500q2.500 1.500 5.500 0" stroke="#8f7fd0" stroke-width="1.300" fill="none"/><text x="24" y="44" font-family="Liberation Sans,sans-serif" font-weight="700" font-size="7.4" fill="#fff" text-anchor="middle">NCE</text></g></svg>
<div class="t" style="top:1590.8px;font-size:28.6px;left:1239.5px;-webkit-text-stroke:.35px;letter-spacing:0.29px;">Play Store</div>
<div class="t" style="top:1590.8px;font-size:28.6px;left:1545.5px;-webkit-text-stroke:.35px;letter-spacing:0.4px;">NCE Android Weekly</div>
<div class="t" style="top:1590.8px;font-size:28.6px;left:1945.9px;-webkit-text-stroke:.35px;letter-spacing:0.63px;">4 hours ago</div>
<div class="t" style="top:1590.8px;font-size:28.6px;left:2249.6px;-webkit-text-stroke:.35px;letter-spacing:0.71px;">in 7 days</div>
<div class="t" style="top:1590.8px;font-size:28.6px;left:2748.6px;-webkit-text-stroke:.35px;letter-spacing:1.92px;">$9.99</div>
<div class="badge" style="top:1581px;width:142px;background:#e8f7ee"></div>
<div class="t" style="top:1592.5px;font-size:24.5px;left:2873.1px;font-weight:700;color:#59cd86;letter-spacing:-0.62px;">RENEWAL</div>
<div class="hl" style="top:1645px"></div>
<svg class="abs" style="left:290px;top:1680.2px" width="32" height="18.5" viewBox="0 0 32 18.5"><rect width="32" height="18.5" fill="#f3e9ea"/><rect y="0.00" width="32" height="1.42" fill="#c24e59"/><rect y="2.85" width="32" height="1.42" fill="#c24e59"/><rect y="5.69" width="32" height="1.42" fill="#c24e59"/><rect y="8.54" width="32" height="1.42" fill="#c24e59"/><rect y="11.38" width="32" height="1.42" fill="#c24e59"/><rect y="14.23" width="32" height="1.42" fill="#c24e59"/><rect y="17.08" width="32" height="1.42" fill="#c24e59"/><rect width="13" height="9.96" fill="#585b99"/></svg>
<div class="anon" style="top:1670px"></div>
<div class="t" style="top:1677.0px;font-size:25.2px;left:358.2px;font-weight:700;color:#747474;letter-spacing:-0.33px;">ANONYMOUS</div>
<div class="t" style="top:1674.8px;font-size:28.6px;left:542.0px;-webkit-text-stroke:.35px;color:#5560d8;letter-spacing:1.48px;">ef6729dd...a93d6a36</div>
<svg class="abs" style="left:1046px;top:1665px" width="48" height="48" viewBox="0 0 48 48"><defs><clipPath id="u6"><rect width="48" height="48" rx="11.5"/></clipPath></defs><g clip-path="url(#u6)"><rect width="48" height="48" fill="#d5d1fb"/><path d="M0 33.2Q24 35.600 48 33.200V48H0z" fill="#674fae"/><path d="M24 3C15 3 10.200 9.500 10.200 17.500S15.500 32 24 32z" fill="#705cb8"/><path d="M24 3C33 3 37.800 9.500 37.800 17.500S32.500 32 24 32z" fill="#ece9fd"/><path d="M14 9.500q3 2 6-.5M12.500 15q4 2.500 8 0M13 21q4 2 8-.500M16 26.500q2.500 1.500 5.500 0" stroke="#8f7fd0" stroke-width="1.300" fill="none"/><text x="24" y="44" font-family="Liberation Sans,sans-serif" font-weight="700" font-size="5.4" fill="#fff" text-anchor="middle">NCMHCE</text></g></svg>
<div class="t" style="top:1674.8px;font-size:28.6px;left:1240.0px;-webkit-text-stroke:.35px;letter-spacing:0.61px;">App Store</div>
<div class="t" style="top:1674.8px;font-size:28.6px;left:1545.5px;-webkit-text-stroke:.35px;letter-spacing:0.03px;">NCMHCE iOS Weekly</div>
<div class="t" style="top:1674.8px;font-size:28.6px;left:1945.1px;-webkit-text-stroke:.35px;letter-spacing:0.71px;">6 hours ago</div>
<div class="t" style="top:1674.8px;font-size:28.6px;left:2249.6px;-webkit-text-stroke:.35px;letter-spacing:0.71px;">in 7 days</div>
<div class="t" style="top:1674.8px;font-size:28.6px;left:2748.6px;-webkit-text-stroke:.35px;letter-spacing:1.92px;">$9.99</div>
<div class="badge" style="top:1665px;width:142px;background:#e8f7ee"></div>
<div class="t" style="top:1676.5px;font-size:24.5px;left:2873.1px;font-weight:700;color:#59cd86;letter-spacing:-0.62px;">RENEWAL</div>
<div class="hl" style="top:1729px"></div>
<svg class="abs" style="left:290px;top:1764.2px" width="32" height="18.5" viewBox="0 0 32 18.5"><rect width="32" height="18.5" fill="#f3e9ea"/><rect y="0.00" width="32" height="1.42" fill="#c24e59"/><rect y="2.85" width="32" height="1.42" fill="#c24e59"/><rect y="5.69" width="32" height="1.42" fill="#c24e59"/><rect y="8.54" width="32" height="1.42" fill="#c24e59"/><rect y="11.38" width="32" height="1.42" fill="#c24e59"/><rect y="14.23" width="32" height="1.42" fill="#c24e59"/><rect y="17.08" width="32" height="1.42" fill="#c24e59"/><rect width="13" height="9.96" fill="#585b99"/></svg>
<div class="anon" style="top:1754px"></div>
<div class="t" style="top:1761.0px;font-size:25.2px;left:358.2px;font-weight:700;color:#747474;letter-spacing:-0.33px;">ANONYMOUS</div>
<div class="t" style="top:1758.8px;font-size:28.6px;left:542.0px;-webkit-text-stroke:.35px;color:#5560d8;letter-spacing:1.58px;">5491240e...dd393be2</div>
<svg class="abs" style="left:1046px;top:1749px" width="48" height="48" viewBox="0 0 48 48"><defs><clipPath id="u7"><rect width="48" height="48" rx="11.5"/></clipPath></defs><g clip-path="url(#u7)"><rect width="48" height="48" fill="#d5d1fb"/><path d="M0 33.2Q24 35.600 48 33.200V48H0z" fill="#674fae"/><path d="M24 3C15 3 10.200 9.500 10.200 17.500S15.500 32 24 32z" fill="#705cb8"/><path d="M24 3C33 3 37.800 9.500 37.800 17.500S32.500 32 24 32z" fill="#ece9fd"/><path d="M14 9.500q3 2 6-.5M12.500 15q4 2.500 8 0M13 21q4 2 8-.500M16 26.500q2.500 1.500 5.500 0" stroke="#8f7fd0" stroke-width="1.300" fill="none"/><text x="24" y="44" font-family="Liberation Sans,sans-serif" font-weight="700" font-size="7.4" fill="#fff" text-anchor="middle">NCE</text></g></svg>
<div class="t" style="top:1758.8px;font-size:28.6px;left:1239.5px;-webkit-text-stroke:.35px;letter-spacing:0.29px;">Play Store</div>
<div class="t" style="top:1758.8px;font-size:28.6px;left:1545.5px;-webkit-text-stroke:.35px;letter-spacing:0.57px;">NCE Android Monthly</div>
<div class="t" style="top:1758.8px;font-size:28.6px;left:1945.1px;-webkit-text-stroke:.35px;letter-spacing:0.71px;">6 hours ago</div>
<div class="t" style="top:1758.8px;font-size:28.6px;left:2249.6px;-webkit-text-stroke:.35px;letter-spacing:0.62px;">in a month</div>
<div class="t" style="top:1758.8px;font-size:28.6px;left:2730.0px;-webkit-text-stroke:.35px;letter-spacing:2.08px;">$24.99</div>
<div class="badge" style="top:1749px;width:142px;background:#e8f7ee"></div>
<div class="t" style="top:1760.5px;font-size:24.5px;left:2873.1px;font-weight:700;color:#59cd86;letter-spacing:-0.62px;">RENEWAL</div>
<div class="hl" style="top:1813px"></div>
<svg class="abs" style="left:290px;top:1848.2px" width="32" height="18.5" viewBox="0 0 32 18.5"><rect width="32" height="18.5" fill="#f3e9ea"/><rect y="0.00" width="32" height="1.42" fill="#c24e59"/><rect y="2.85" width="32" height="1.42" fill="#c24e59"/><rect y="5.69" width="32" height="1.42" fill="#c24e59"/><rect y="8.54" width="32" height="1.42" fill="#c24e59"/><rect y="11.38" width="32" height="1.42" fill="#c24e59"/><rect y="14.23" width="32" height="1.42" fill="#c24e59"/><rect y="17.08" width="32" height="1.42" fill="#c24e59"/><rect width="13" height="9.96" fill="#585b99"/></svg>
<div class="anon" style="top:1838px"></div>
<div class="t" style="top:1845.0px;font-size:25.2px;left:358.2px;font-weight:700;color:#747474;letter-spacing:-0.33px;">ANONYMOUS</div>
<div class="t" style="top:1842.8px;font-size:28.6px;left:541.9px;-webkit-text-stroke:.35px;color:#5560d8;letter-spacing:1.43px;">9877e763...aae407cb</div>
<svg class="abs" style="left:1046px;top:1833px" width="48" height="48" viewBox="0 0 48 48"><defs><clipPath id="u8"><rect width="48" height="48" rx="11.5"/></clipPath></defs><g clip-path="url(#u8)"><rect width="48" height="48" fill="#d5d1fb"/><path d="M0 33.2Q24 35.600 48 33.200V48H0z" fill="#674fae"/><path d="M24 3C15 3 10.200 9.500 10.200 17.500S15.500 32 24 32z" fill="#705cb8"/><path d="M24 3C33 3 37.800 9.500 37.800 17.500S32.500 32 24 32z" fill="#ece9fd"/><path d="M14 9.500q3 2 6-.5M12.500 15q4 2.500 8 0M13 21q4 2 8-.500M16 26.500q2.500 1.500 5.500 0" stroke="#8f7fd0" stroke-width="1.300" fill="none"/><text x="24" y="44" font-family="Liberation Sans,sans-serif" font-weight="700" font-size="7.4" fill="#fff" text-anchor="middle">NCE</text></g></svg>
<div class="t" style="top:1842.8px;font-size:28.6px;left:1239.5px;-webkit-text-stroke:.35px;letter-spacing:0.29px;">Play Store</div>
<div class="t" style="top:1842.8px;font-size:28.6px;left:1545.5px;-webkit-text-stroke:.35px;letter-spacing:0.4px;">NCE Android Weekly</div>
<div class="t" style="top:1842.8px;font-size:28.6px;left:1945.4px;-webkit-text-stroke:.35px;letter-spacing:0.68px;">8 hours ago</div>
<div class="t" style="top:1842.8px;font-size:28.6px;left:2249.6px;-webkit-text-stroke:.35px;letter-spacing:0.71px;">in 7 days</div>
<div class="t" style="top:1842.8px;font-size:28.6px;left:2748.6px;-webkit-text-stroke:.35px;letter-spacing:1.92px;">$9.99</div>
<div class="badge" style="top:1833px;width:142px;background:#e8f7ee"></div>
<div class="t" style="top:1844.5px;font-size:24.5px;left:2873.1px;font-weight:700;color:#59cd86;letter-spacing:-0.62px;">RENEWAL</div>
<div class="hl" style="top:1897px"></div>
<svg class="abs" style="left:290px;top:1932.2px" width="32" height="18.5" viewBox="0 0 32 18.5"><rect width="32" height="18.5" fill="#f3e9ea"/><rect y="0.00" width="32" height="1.42" fill="#c24e59"/><rect y="2.85" width="32" height="1.42" fill="#c24e59"/><rect y="5.69" width="32" height="1.42" fill="#c24e59"/><rect y="8.54" width="32" height="1.42" fill="#c24e59"/><rect y="11.38" width="32" height="1.42" fill="#c24e59"/><rect y="14.23" width="32" height="1.42" fill="#c24e59"/><rect y="17.08" width="32" height="1.42" fill="#c24e59"/><rect width="13" height="9.96" fill="#585b99"/></svg>
<div class="anon" style="top:1922px"></div>
<div class="t" style="top:1929.0px;font-size:25.2px;left:358.2px;font-weight:700;color:#747474;letter-spacing:-0.33px;">ANONYMOUS</div>
<div class="t" style="top:1926.8px;font-size:28.6px;left:541.4px;-webkit-text-stroke:.35px;color:#5560d8;letter-spacing:1.38px;">bcdb02ec...29b0efab</div>
<svg class="abs" style="left:1052.6px;top:1922.0px" width="35" height="35" viewBox="0 0 28 28"><defs><clipPath id="u9"><rect x="0" y="17.200" width="28" height="12"/></clipPath></defs><path d="M4.3 3.600L14 0.800L23.700 3.600V16.500C23.700 21.800 18.800 25.400 14 27.400C9.200 25.400 4.300 21.800 4.300 16.500Z" fill="#fff" stroke="#2a3d78" stroke-width="1.100" stroke-linejoin="round"/><path clip-path="url(#u9)" d="M4.3 3.600L14 0.800L23.700 3.600V16.500C23.700 21.800 18.800 25.400 14 27.400C9.200 25.400 4.300 21.800 4.300 16.500Z" fill="#1f2fbf" stroke="#2a3d78" stroke-width="1.100" stroke-linejoin="round"/><path d="M0.600 10.600Q14 9 27.400 10.600L26.200 17.600Q14 19.400 1.800 17.600Z" fill="#fff" stroke="#a4a4a8" stroke-width=".7" stroke-linejoin="round"/><text x="14" y="8.600" font-family="Liberation Sans,sans-serif" font-weight="700" font-size="5.600" fill="#1b1b22" text-anchor="middle" letter-spacing="-.2">AZ-104</text><text x="14" y="15.300" font-family="Liberation Sans,sans-serif" font-size="2.300" fill="#555" text-anchor="middle">Exam Practice Test</text><path d="M10.300 23.800a1.900 1.900 0 0 1 .600-3.600 3.200 3.200 0 0 1 6.200 0 1.900 1.900 0 0 1 .600 3.600z" fill="#fff"/><path d="M12.900 23l2.200-2.600M12.900 20.400l2.200 2.600" stroke="#1f2fbf" stroke-width=".8"/></svg>
<div class="t" style="top:1926.8px;font-size:28.6px;left:1239.5px;-webkit-text-stroke:.35px;letter-spacing:0.29px;">Play Store</div>
<div class="t" style="top:1926.8px;font-size:28.6px;left:1546.3px;-webkit-text-stroke:.35px;letter-spacing:1.15px;">AZ-104 Android Weekly</div>
<div class="t" style="top:1926.8px;font-size:28.6px;left:1945.2px;-webkit-text-stroke:.35px;letter-spacing:0.7px;">9 hours ago</div>
<div class="t" style="top:1926.8px;font-size:28.6px;left:2249.6px;-webkit-text-stroke:.35px;letter-spacing:0.71px;">in 7 days</div>
<div class="t" style="top:1926.8px;font-size:28.6px;left:2748.6px;-webkit-text-stroke:.35px;letter-spacing:1.92px;">$9.99</div>
<div class="badge" style="top:1917px;width:142px;background:#e8f7ee"></div>
<div class="t" style="top:1928.5px;font-size:24.5px;left:2873.1px;font-weight:700;color:#59cd86;letter-spacing:-0.62px;">RENEWAL</div>
<div class="hl" style="top:1981px"></div>
<div class="hl" style="top:1477px"></div>
</div></body></html>
